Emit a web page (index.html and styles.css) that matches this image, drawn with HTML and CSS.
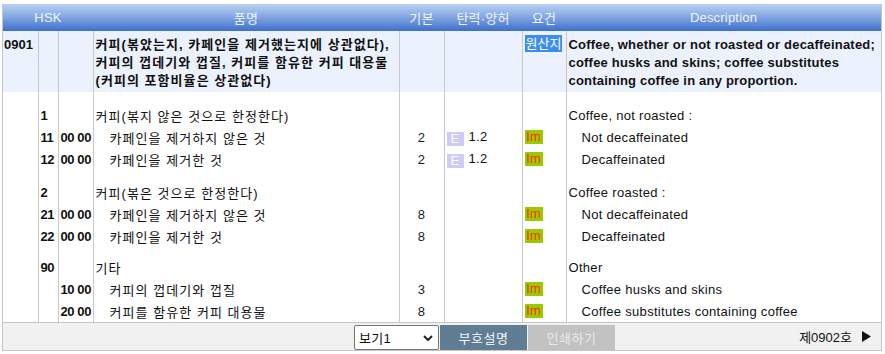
FILE: index.html
```html
<!DOCTYPE html>
<html lang="ko">
<head>
<meta charset="utf-8">
<title>HSK 0901</title>
<link rel="stylesheet" href="styles.css">
</head>
<body>
<div class="wrap">
  <table class="tariff">
    <colgroup>
      <col class="c1"><col class="c2"><col class="c3"><col class="c4"><col class="c5"><col class="c6"><col class="c7"><col class="c8">
    </colgroup>
    <thead>
      <tr>
        <th colspan="3">HSK</th>
        <th>품명</th>
        <th>기본</th>
        <th>탄력·양허</th>
        <th>요건</th>
        <th>Description</th>
      </tr>
    </thead>
    <tbody>
      <tr class="heading">
        <td class="num">0901</td>
        <td></td>
        <td></td>
        <td class="name bold">커피(볶았는지, 카페인을 제거했는지에 상관없다),<br>커피의 껍데기와 껍질, 커피를 함유한 커피 대용물<br>(커피의 포함비율은 상관없다)</td>
        <td></td>
        <td></td>
        <td class="req"><span class="origin">원산지</span></td>
        <td class="desc bold">Coffee, whether or not roasted or decaffeinated;<br>coffee husks and skins; coffee substitutes<br>containing coffee in any proportion.</td>
      </tr>
      <tr class="gap gap-first"><td></td><td></td><td></td><td></td><td></td><td></td><td></td><td></td></tr>
      <tr>
        <td></td><td class="num">1</td><td></td>
        <td class="name">커피(볶지 않은 것으로 한정한다)</td>
        <td></td><td></td><td></td>
        <td class="desc">Coffee, not roasted :</td>
      </tr>
      <tr>
        <td></td><td class="num">11</td><td class="num">00 00</td>
        <td class="name"><span class="ind">카페인을 제거하지 않은 것</span></td>
        <td class="rate">2</td>
        <td class="elastic"><span class="e-badge">E</span><span>1.2</span></td>
        <td class="req"><span class="im">Im</span></td>
        <td class="desc"><span class="ind">Not decaffeinated</span></td>
      </tr>
      <tr>
        <td></td><td class="num">12</td><td class="num">00 00</td>
        <td class="name"><span class="ind">카페인을 제거한 것</span></td>
        <td class="rate">2</td>
        <td class="elastic"><span class="e-badge">E</span><span>1.2</span></td>
        <td class="req"><span class="im">Im</span></td>
        <td class="desc"><span class="ind">Decaffeinated</span></td>
      </tr>
      <tr class="gap gap-mid"><td></td><td></td><td></td><td></td><td></td><td></td><td></td><td></td></tr>
      <tr>
        <td></td><td class="num">2</td><td></td>
        <td class="name">커피(볶은 것으로 한정한다)</td>
        <td></td><td></td><td></td>
        <td class="desc">Coffee roasted :</td>
      </tr>
      <tr>
        <td></td><td class="num">21</td><td class="num">00 00</td>
        <td class="name"><span class="ind">카페인을 제거하지 않은 것</span></td>
        <td class="rate">8</td>
        <td class="elastic"></td>
        <td class="req"><span class="im">Im</span></td>
        <td class="desc"><span class="ind">Not decaffeinated</span></td>
      </tr>
      <tr>
        <td></td><td class="num">22</td><td class="num">00 00</td>
        <td class="name"><span class="ind">카페인을 제거한 것</span></td>
        <td class="rate">8</td>
        <td class="elastic"></td>
        <td class="req"><span class="im">Im</span></td>
        <td class="desc"><span class="ind">Decaffeinated</span></td>
      </tr>
      <tr class="gap gap-last"><td></td><td></td><td></td><td></td><td></td><td></td><td></td><td></td></tr>
      <tr>
        <td></td><td class="num">90</td><td></td>
        <td class="name">기타</td>
        <td></td><td></td><td></td>
        <td class="desc">Other</td>
      </tr>
      <tr>
        <td></td><td></td><td class="num">10 00</td>
        <td class="name"><span class="ind">커피의 껍데기와 껍질</span></td>
        <td class="rate">3</td>
        <td class="elastic"></td>
        <td class="req"><span class="im">Im</span></td>
        <td class="desc"><span class="ind">Coffee husks and skins</span></td>
      </tr>
      <tr>
        <td></td><td></td><td class="num">20 00</td>
        <td class="name"><span class="ind">커피를 함유한 커피 대용물</span></td>
        <td class="rate">8</td>
        <td class="elastic"></td>
        <td class="req"><span class="im">Im</span></td>
        <td class="desc"><span class="ind">Coffee substitutes containing coffee</span></td>
      </tr>
    </tbody>
  </table>
  <div class="footer">
    <div class="controls">
      <div class="select">
        <span>보기1</span>
        <svg class="chev" width="10" height="6" viewBox="0 0 10 6"><path d="M1 1 L5 5 L9 1" fill="none" stroke="#222" stroke-width="2"/></svg>
      </div>
      <span class="btn btn-legend">부호설명</span>
      <span class="btn btn-print">인쇄하기</span>
    </div>
    <div class="next">
      <span>제0902호</span>
      <svg class="arrow" width="9" height="11" viewBox="0 0 9 11"><path d="M0 0 L9 5.5 L0 11 Z" fill="#111"/></svg>
    </div>
  </div>
</div>
</body>
</html>
```

FILE: styles.css
```css
html, body {
  margin: 0;
  padding: 0;
  background: #ffffff;
}

body {
  font-family: "Liberation Sans", "Noto Sans CJK KR", sans-serif;
  font-size: 13px;
  letter-spacing: 0.3px;
  color: #111;
}

.wrap {
  margin: 4px 0 0 2px;
  width: 880px;
  box-sizing: border-box;
  border-left: 1px solid #c6c6c6;
  border-right: 1px solid #c6c6c6;
}

.tariff {
  width: 878px;
  table-layout: fixed;
  border-collapse: collapse;
  border-spacing: 0;
}

.c1 { width: 35px; }
.c2 { width: 20px; }
.c3 { width: 35px; }
.c4 { width: 306px; }
.c5 { width: 45px; }
.c6 { width: 78px; }
.c7 { width: 44px; }
.c8 { width: 315px; }

.tariff th {
  height: 27px;
  padding: 0;
  font-weight: normal;
  color: #eef4ff;
  letter-spacing: 0.2px;
  text-align: center;
  background: linear-gradient(#b9d2f4 0%, #86a9e3 45%, #3d6fcc 100%);
}

.tariff td {
  padding: 0 2px;
  height: 22px;
  vertical-align: middle;
  white-space: nowrap;
  border-left: 1px solid #c9c9c9;
  overflow: hidden;
}

.tariff td:first-child {
  border-left: none;
}

.heading td {
  background: #ebf2fd;
  vertical-align: top;
  padding-top: 5px;
  padding-bottom: 2px;
  line-height: 18px;
  height: auto;
}

.gap td {
  height: 10px;
  padding: 0;
}

.gap-first td {
  height: 12px;
}

.gap-mid td {
  height: 11px;
}

.gap-last td {
  height: 9px;
}

.bold {
  font-weight: bold;
}

.num {
  font-weight: bold;
  letter-spacing: -0.4px;
  padding-left: 1px;
}

.heading .num {
  padding-left: 1px;
  letter-spacing: 0;
}

.name {
  padding-left: 2px;
  letter-spacing: 1.05px;
}

.desc {
  padding-left: 2px;
}

.heading .desc {
  letter-spacing: 0.2px;
}

.name .ind {
  padding-left: 14px;
}

.desc .ind {
  padding-left: 13px;
}

.rate {
  text-align: center;
  color: #1c1c2a;
}

.elastic {
  padding-left: 1px;
}

.e-badge {
  display: inline-block;
  width: 17px;
  height: 14px;
  line-height: 14px;
  text-align: center;
  background: #ccccf6;
  color: #ffffff;
  margin-right: 5px;
  vertical-align: -2px;
}

.req {
  padding-left: 2px;
}

.im {
  display: inline-block;
  width: 18px;
  height: 14px;
  line-height: 14px;
  background: #99c900;
  color: #ff3300;
  letter-spacing: 0;
  text-align: center;
  vertical-align: 1px;
}

.origin {
  display: inline-block;
  padding: 0 1px;
  height: 17px;
  line-height: 17px;
  background: #3b8ef0;
  color: #ffffff;
  letter-spacing: 0;
}

.heading .req {
  padding-top: 4px;
}

.footer {
  display: flex;
  align-items: center;
  height: 27px;
  background: #f1f1f1;
  border-top: 1px solid #c6c6c6;
  border-bottom: 1px solid #c6c6c6;
}

.controls {
  display: flex;
  align-items: stretch;
  height: 25px;
  margin-left: 351px;
  margin-top: 2px;
}

.select {
  display: flex;
  align-items: center;
  justify-content: space-between;
  width: 85px;
  padding: 0 5px 0 4px;
  box-sizing: border-box;
  background: #ffffff;
  border: 1px solid #767676;
  border-radius: 2px;
  color: #111;
}

.btn {
  display: flex;
  align-items: center;
  justify-content: center;
  width: 87px;
  margin-left: 1px;
  letter-spacing: 0.5px;
}

.btn-legend {
  background: #617d94;
  color: #f2f5f8;
}

.btn-print {
  background: #c2c2c2;
  color: #e9e9e9;
}

.next {
  display: flex;
  align-items: center;
  gap: 10px;
  margin-left: auto;
  margin-right: 10px;
  color: #111;
  letter-spacing: 0;
}

.arrow {
  display: block;
}
```
